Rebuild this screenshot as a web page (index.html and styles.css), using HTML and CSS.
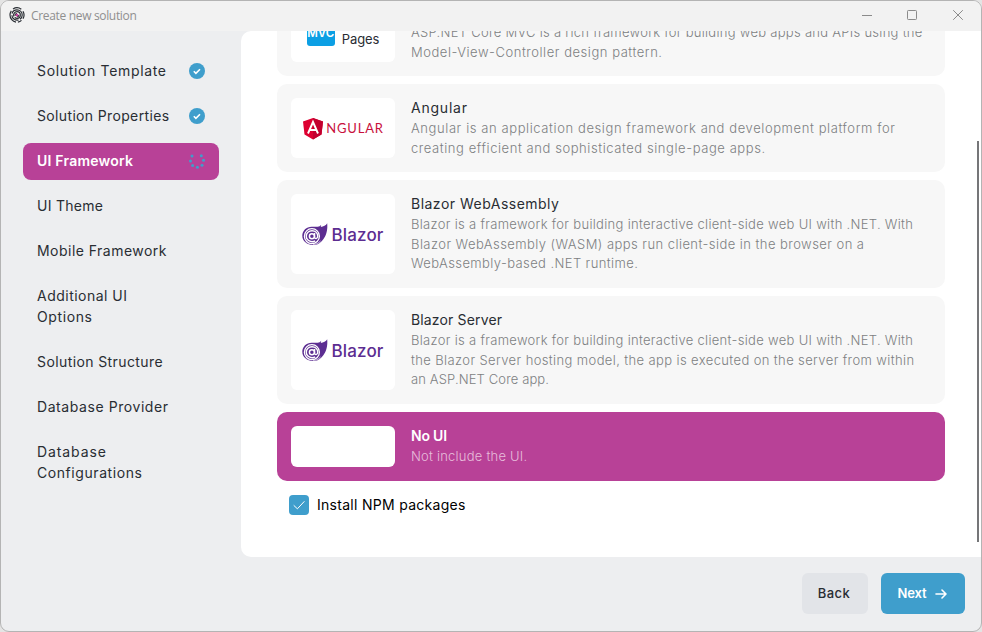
FILE: index.html
```html
<!DOCTYPE html>
<html lang="en">
<head>
<meta charset="utf-8">
<title>Create new solution</title>
<link rel="stylesheet" href="styles.css">
</head>
<body>
<svg width="0" height="0" class="defs">
  <symbol id="done" viewBox="0 0 16 16"><circle cx="8" cy="8" r="8" fill="#3f9ecc"/><path d="M4.800 8.200l2.100 2.100 4.100-4.100" fill="none" stroke="#fff" stroke-width="1.600"/></symbol>
  <symbol id="blazor" viewBox="0 0 26 23">
    <path d="M25.200.3c.6 6.500-.9 12.200-3.700 15.700-2.600 3.700-6 6.100-10.500 6.100C5 22.100.3 18 .3 12.800.3 7.600 4.500 3.700 9.600 3.700c3.700 0 5.500.3 7.200-.2 1.200-.4 2-1.200 2.300-1.800.1.900-.1 1.600-.4 2.200C21.500 3.700 24 2.600 25.200.3z" fill="#5c2d91"/>
    <circle cx="9.900" cy="13.200" r="7.500" fill="#5c2d91" stroke="#fff" stroke-width="1.300"/>
    <circle cx="9.900" cy="13.200" r="2.500" fill="none" stroke="#fff" stroke-width="1.500"/>
    <path d="M12.600 10v4c0 2.400 3.100 2 3.100-.8 0-3.200-2.500-5.500-5.700-5.500s-5.700 2.400-5.700 5.500 2.500 5.500 5.700 5.500c1.200 0 2.300-.3 3.200-.9" fill="none" stroke="#fff" stroke-width="1.400"/>
    <path d="M18.500 18c-2 2.300-4.500 3.500-7.500 3.400" fill="none" stroke="#fff" stroke-width=".7"/>
  </symbol>
</svg>
<div class="window">
  <header class="titlebar">
    <svg class="app-icon" viewBox="0 0 16 16" fill="none" stroke="#292d33" stroke-width="1.200">
      <path d="M4 2C6.500.4 10 .5 12.300 2.300M14 4.200c1.300 2.400 1.300 5.300 0 7.600M12.500 13.400c-1 .9-2.300 1.500-3.600 1.700M7 15.100C3.600 14.600 1 11.600 1 8c0-1.500.5-3 1.300-4.200"/>
      <path d="M3 6.500C3.700 4.200 5.700 2.800 8 2.800c3 0 5.200 2.300 5.200 5.200 0 1.800-.8 3.400-2.200 4.300M9.500 13.100C6 13.700 3 11.300 2.900 8.200"/>
      <path d="M4.800 9.500C4 6.900 5.700 4.700 8 4.700c1.900 0 3.300 1.500 3.300 3.300 0 2-1.400 3.300-3.200 3.300-1 0-1.800-.4-2.400-1"/>
      <path d="M6.200 8.800C6 7.500 6.800 6.500 8 6.500M9.800 8c0 1-.8 1.800-1.800 1.800"/><circle cx="8" cy="8.200" r=".8" fill="#c73e9e" stroke="#c73e9e"/>
    </svg>
    <span class="caption">Create new solution</span>
    <svg class="controls" viewBox="0 0 104 12" fill="none" stroke="#8b8b8b"><path d="M0 6.500h10"/><rect x="45.500" y="1.500" width="9" height="9" rx=".8"/><path d="M91.200 1.200l9.600 9.600M100.800 1.200l-9.600 9.600"/></svg>
  </header>
  <div class="body">
    <nav class="steps">
      <div class="step"><span class="ls-66">Solution Template</span><svg><use href="#done"/></svg></div>
      <div class="step"><span class="ls-35">Solution Properties</span><svg><use href="#done"/></svg></div>
      <div class="step active"><span class="ls-22">UI Framework</span>
        <svg viewBox="0 0 16 16" fill="#3f9ecc"><circle cx="3" cy="3" r="1.500"/><circle cx="1.500" cy="8" r="1.500"/><circle cx="3.600" cy="12.500" r="1.500"/><circle cx="8.400" cy="14.300" r="1.500"/><circle cx="13" cy="12.300" r="1.500"/><circle cx="14.500" cy="7.300" r="1.500"/><circle cx="12.300" cy="2.700" r="1.500"/></svg>
      </div>
      <div class="step"><span class="ls-28">UI Theme</span></div>
      <div class="step"><span class="ls-47">Mobile Framework</span></div>
      <div class="step"><span><span class="ls-48">Additional UI</span><br><span class="ls-60">Options</span></span></div>
      <div class="step"><span class="ls-40">Solution Structure</span></div>
      <div class="step"><span class="ls-57">Database Provider</span></div>
      <div class="step"><span><span class="ls-90">Database</span><br><span class="ls-57">Configurations</span></span></div>
    </nav>
    <main class="panel">
      <div class="list">
        <section class="card clipped">
          <div class="logo mvc"><span class="mvc-badge">MVC</span><span class="mvc-name">Pages</span></div>
          <div class="text"><p><span class="ls-28">ASP.NET Core MVC is a rich framework for building web apps and APIs using the</span><span class="ls-53">Model-View-Controller design pattern.</span></p></div>
        </section>
        <section class="card">
          <div class="logo">
            <svg class="angular" viewBox="0 0 20 22"><path d="M10 0l10 3.500-1.500 13L10 21.500 1.500 16.500 0 3.500z" fill="#dd0031"/><path d="M10 0l10 3.500-1.500 13L10 21.500z" fill="#c3002f"/><path d="M5 15.500L10 4l5 11.500M6.900 12h6.200" fill="none" stroke="#fff" stroke-width="1.900"/></svg>
            <span class="angular-name">NGULAR</span>
          </div>
          <div class="text"><h3 class="ls-78">Angular</h3><p><span class="ls-59">Angular is an application design framework and development platform for</span><span class="ls-57">creating efficient and sophisticated single-page apps.</span></p></div>
        </section>
        <section class="card">
          <div class="logo"><svg class="blazor"><use href="#blazor"/></svg><span class="blazor-name">Blazor</span></div>
          <div class="text"><h3 class="ls-48">Blazor WebAssembly</h3><p><span class="ls-31">Blazor is a framework for building interactive client-side web UI with .NET. With</span><span class="ls-44">Blazor WebAssembly (WASM) apps run client-side in the browser on a</span><span class="ls-40">WebAssembly-based .NET runtime.</span></p></div>
        </section>
        <section class="card">
          <div class="logo"><svg class="blazor"><use href="#blazor"/></svg><span class="blazor-name">Blazor</span></div>
          <div class="text"><h3 class="ls-15">Blazor Server</h3><p><span class="ls-31">Blazor is a framework for building interactive client-side web UI with .NET. With</span><span class="ls-38">the Blazor Server hosting model, the app is executed on the server from within</span><span class="ls-12">an ASP.NET Core app.</span></p></div>
        </section>
        <section class="card selected">
          <div class="logo"></div>
          <div class="text"><h3>No UI</h3><p><span class="ls-22">Not include the UI.</span></p></div>
        </section>
        <label class="npm"><svg viewBox="0 0 20 20"><rect width="20" height="20" rx="4" fill="#3f9ecc"/><path d="M4.700 10.300l3.700 3.500 7-7.500" fill="none" stroke="#fff"/></svg><span class="ls-28">Install NPM packages</span></label>
      </div>
      <div class="scrollbar"></div>
    </main>
  </div>
  <footer class="footer">
    <div class="btn back">Back</div>
    <div class="btn next"><span>Next</span><svg viewBox="0 0 12 10" fill="none" stroke="#fff" stroke-width="1.600" stroke-linecap="round" stroke-linejoin="round"><path d="M1 5h10M7 1l4 4-4 4"/></svg></div>
  </footer>
</div>
</body>
</html>
```
FILE: styles.css
```css
* { box-sizing: border-box; }
body { margin: 0; background: #e4e4e4; font: 14px/21px Inter, "Open Sans", sans-serif; color: #292d33; overflow: hidden; }
h3, p { margin: 0; }
.defs { position: absolute; }
.window { width: 982px; height: 632px; border: 1px solid #b4b4b4; border-radius: 9px; background: #edeef0; overflow: hidden; display: flex; flex-direction: column; }
.titlebar { height: 30px; flex: none; background: #f2f2f2; display: flex; align-items: center; padding: 0 15px 0 8px; }
.app-icon { width: 16px; height: 16px; margin-top: -2px; }
.caption { font: 12px/16px "Open Sans", sans-serif; letter-spacing: -.33px; color: #8f8f8f; margin: 0 auto 0 6px; }
.controls { width: 104px; height: 12px; margin-top: -2px; }
.body { display: flex; height: 526px; flex: none; }
.steps { width: 240px; padding: 22px; display: flex; flex-direction: column; gap: 8px; }
.step { width: 196px; padding: 7px 14px 9px; display: flex; justify-content: space-between; align-items: center; border-radius: 8px; white-space: nowrap; }
.step svg { width: 16px; height: 16px; }
.active { background: #b84197; color: #fff; font-weight: 600; }
.panel { flex: 1; background: #fff; border-radius: 10px 0 0 10px; overflow: hidden; display: flex; justify-content: space-between; }
.list { width: 704px; margin-top: -43px; padding-left: 36px; display: flex; flex-direction: column; gap: 8px; }
.card { flex: none; height: 88px; padding: 14px; background: #f7f7f7; border-radius: 10px; display: flex; gap: 16px; }
.card:nth-child(3), .card:nth-child(4) { height: 108px; }
.logo { width: 104px; flex: none; background: #fff; border-radius: 6px; display: flex; align-items: center; justify-content: center; white-space: nowrap; }
.text { white-space: nowrap; }
.clipped .text { align-self: flex-end; }
h3 { font-size: 14px; line-height: 20px; margin-bottom: 1px; font-weight: 400; color: #292d33; }
p { font-size: 13px; line-height: 19.500px; font-weight: 300; color: #7d7f82; }
p span { display: block; }
.mvc { align-items: flex-end; gap: 7px; padding-bottom: 13px; }
.mvc-badge { width: 28px; height: 30px; margin-bottom: 3px; border-radius: 3px; background: #0c9fe4; color: #fff; font-size: 11.500px; font-weight: 600; text-align: center; line-height: 35px; }
.mvc-name { font-size: 13px; letter-spacing: -.1px; line-height: 20px; }
.angular { width: 20px; height: 22px; margin: 2px 3px 0 0; }
.angular-name { font: 400 13px/20px Lato, sans-serif; letter-spacing: .85px; color: #c8103c; margin-right: -1px; }
.blazor { width: 26px; height: 23px; margin: 0 3px 0 0; }
.blazor-name { font-size: 17px; line-height: 21px; padding-top: 2px; font-weight: 500; letter-spacing: .15px; color: #5c2d91; }
.selected { height: 69px; background: #b84197; }
.selected h3 { color: #fff; font-weight: 600; letter-spacing: -.2px; }
.selected p { color: #e7bddb; }
.npm { display: flex; align-items: center; gap: 8px; padding: 6px 12px; height: 32px; color: #000; }
.npm svg { width: 20px; height: 20px; }
.npm span { padding-bottom: 2px; }
.scrollbar { width: 2px; height: 401px; margin: 110px 2px 0 0; background: #757678; }
.footer { flex: 1; display: flex; justify-content: flex-end; gap: 13px; padding: 16px 16px 0; }
.btn { height: 41px; border-radius: 6px; font-size: 13px; display: flex; align-items: center; justify-content: center; }
.back { width: 66px; padding-right: 2px; background: #e2e4e8; font-weight: 500; letter-spacing: .4px; }
.next { width: 84px; padding-right: 1px; gap: 9px; background: #3f9ecc; color: #fff; font-weight: 600; letter-spacing: -.15px; }
.next svg { width: 12px; height: 10px; margin-top: 1px; }
.ls-12 { letter-spacing: .125px; }
.ls-15 { letter-spacing: .15px; }
.ls-22 { letter-spacing: .22px; }
.ls-28 { letter-spacing: .285px; }
.ls-31 { letter-spacing: .31px; }
.ls-35 { letter-spacing: .35px; }
.ls-38 { letter-spacing: .385px; }
.ls-40 { letter-spacing: .4px; }
.ls-44 { letter-spacing: .444px; }
.ls-47 { letter-spacing: .47px; }
.ls-48 { letter-spacing: .485px; }
.ls-53 { letter-spacing: .535px; }
.ls-57 { letter-spacing: .57px; }
.ls-59 { letter-spacing: .593px; }
.ls-60 { letter-spacing: .6px; }
.ls-66 { letter-spacing: .66px; }
.ls-78 { letter-spacing: .78px; }
.ls-90 { letter-spacing: .91px; }
```
